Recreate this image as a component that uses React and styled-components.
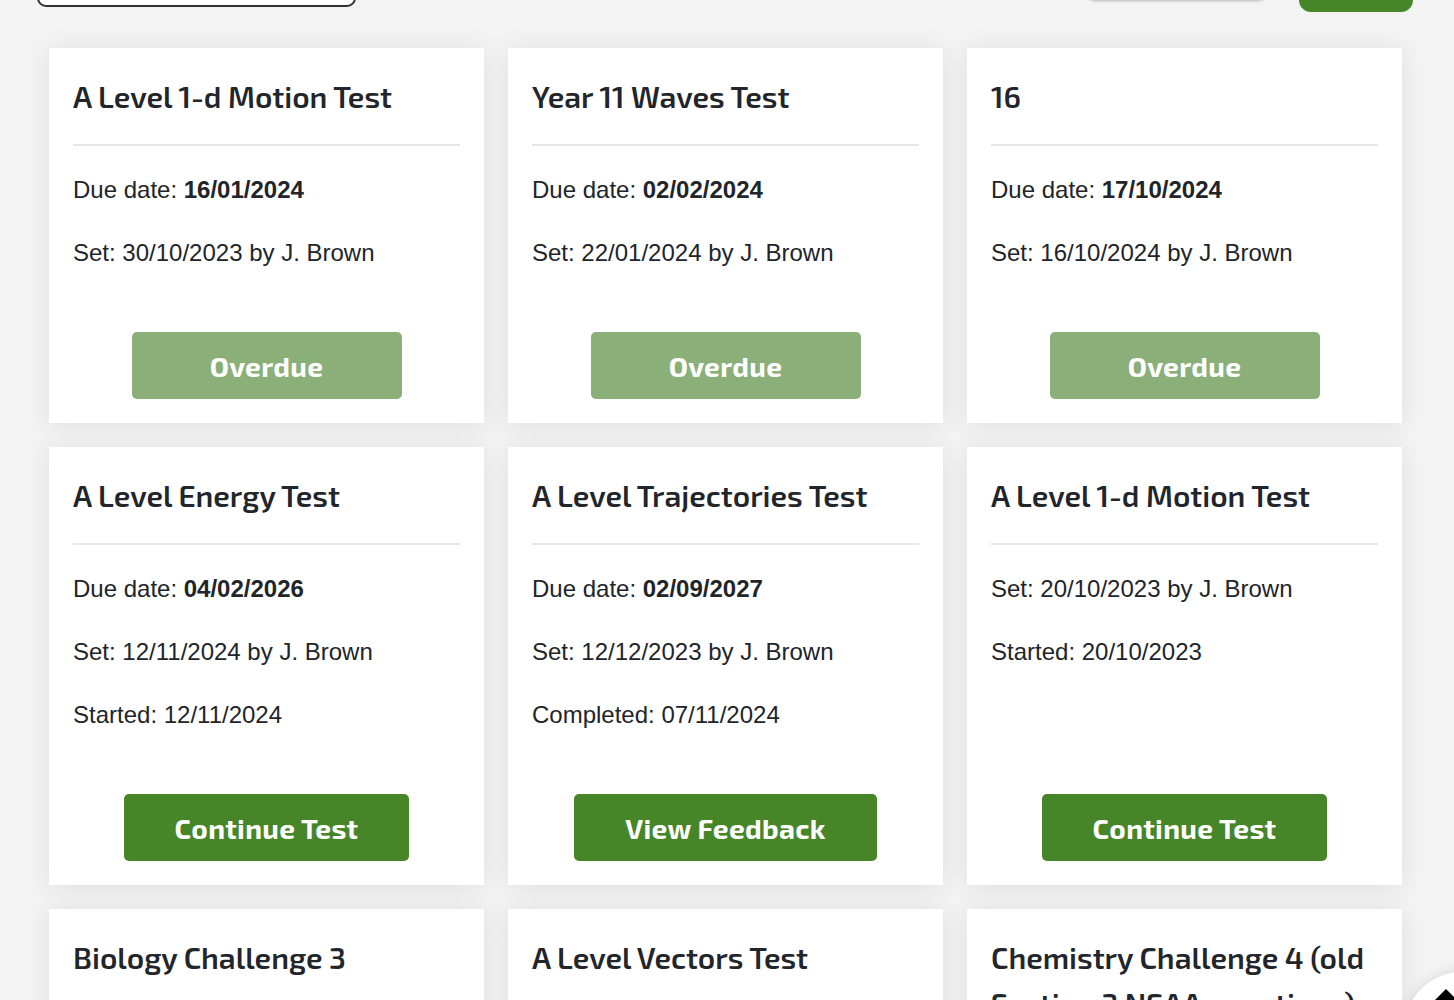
import React from "react";
import styled, { createGlobalStyle } from "styled-components";

const GlobalStyle = createGlobalStyle`
  html, body { margin: 0; padding: 0; }
  body {
    background: #f3f3f3;
    font-family: "Liberation Sans", Arial, sans-serif;
    color: #212529;
    overflow: hidden;
  }
`;

const Page = styled.div`
  margin-top: -45px;
  padding-bottom: 40px;
`;

const Toolbar = styled.div`
  display: flex;
  align-items: flex-start;
  padding: 0 41px 0 37px;
  margin-bottom: 36px;
`;

const SearchBox = styled.div`
  width: 319px;
  height: 52px;
  box-sizing: border-box;
  border: 2px solid #333;
  border-radius: 9px;
  background: #fff;
`;

const Spacer = styled.div`
  flex: 1;
`;

const Toggle = styled.div`
  display: flex;
  width: 183px;
  height: 46px;
  box-sizing: border-box;
  border: 1px solid #c9c9c9;
  border-radius: 10px;
  overflow: hidden;
  margin-right: 31px;
  box-shadow: 0 1px 2px rgba(0, 0, 0, 0.12);
`;

const ToggleHalf = styled.div`
  flex: 1;
  background: ${(p) => (p.$active ? "#fff" : "#e2e2e2")};
`;

const AddButton = styled.div`
  width: 114px;
  height: 57px;
  background: #468628;
  border-radius: 12px;
`;

const Grid = styled.div`
  display: grid;
  grid-template-columns: repeat(3, 435px);
  gap: 24px;
  padding-left: 49px;
`;

const Card = styled.div`
  background: #fff;
  padding: 25px 24px 24px;
  display: flex;
  flex-direction: column;
  box-shadow: 0 2px 24px rgba(0, 0, 0, 0.085);
`;

const Title = styled.h3`
  margin: 0 0 25px;
  font-family: "Exo 2", "Roboto", "Liberation Sans", sans-serif;
  font-weight: 600;
  font-size: 30px;
  line-height: 46px;
  color: #22252a;
`;

const Divider = styled.hr`
  margin: 0;
  border: 0;
  height: 2px;
  background: #e6e6ec;
`;

const Info = styled.div`
  display: flex;
  flex-direction: column;
  gap: 27px;
  padding: 26px 0 61px;
`;

const Line = styled.p`
  margin: 0;
  font-size: 24px;
  line-height: 36px;
  color: #212529;
  b {
    font-weight: 700;
  }
`;

const ButtonRow = styled.div`
  margin-top: auto;
  display: flex;
  justify-content: center;
`;

const ActionButton = styled.button`
  min-width: 270px;
  height: 67px;
  padding: 0 51px;
  border: 0;
  border-radius: 5px;
  background: ${(p) => (p.$muted ? "#8aaf78" : "#468628")};
  color: #fff;
  font-family: "Exo 2", "Roboto", "Liberation Sans", sans-serif;
  font-weight: 700;
  font-size: 28px;
  letter-spacing: 0.3px;
  cursor: pointer;
`;

const ScrollTop = styled.button`
  position: fixed;
  left: 1404px;
  top: 972px;
  width: 116px;
  height: 116px;
  border-radius: 50%;
  border: 0;
  background: #fff;
  box-shadow: 0 0 14px rgba(0, 0, 0, 0.12);
  padding: 0;
  cursor: pointer;
`;

const Arrow = styled.svg`
  position: absolute;
  left: 26px;
  top: 17px;
`;

const cards = [
  {
    title: "A Level 1-d Motion Test",
    due: "16/01/2024",
    lines: ["Set: 30/10/2023 by J. Brown"],
    action: "Overdue",
    muted: true,
  },
  {
    title: "Year 11 Waves Test",
    due: "02/02/2024",
    lines: ["Set: 22/01/2024 by J. Brown"],
    action: "Overdue",
    muted: true,
  },
  {
    title: "16",
    due: "17/10/2024",
    lines: ["Set: 16/10/2024 by J. Brown"],
    action: "Overdue",
    muted: true,
  },
  {
    title: "A Level Energy Test",
    due: "04/02/2026",
    lines: ["Set: 12/11/2024 by J. Brown", "Started: 12/11/2024"],
    action: "Continue Test",
  },
  {
    title: "A Level Trajectories Test",
    due: "02/09/2027",
    lines: ["Set: 12/12/2023 by J. Brown", "Completed: 07/11/2024"],
    action: "View Feedback",
  },
  {
    title: "A Level 1-d Motion Test",
    lines: ["Set: 20/10/2023 by J. Brown", "Started: 20/10/2023"],
    action: "Continue Test",
  },
  {
    title: "Biology Challenge 3",
    due: "01/12/2027",
    lines: ["Set: 01/11/2024 by J. Brown"],
    action: "Start Test",
  },
  {
    title: "A Level Vectors Test",
    due: "03/12/2027",
    lines: ["Set: 02/11/2024 by J. Brown"],
    action: "Start Test",
  },
  {
    title: "Chemistry Challenge 4 (old Section 3 NSAA questions)",
    due: "05/12/2027",
    lines: ["Set: 04/11/2024 by J. Brown"],
    action: "Start Test",
  },
];

export default function App() {
  return (
    <>
      <GlobalStyle />
      <Page>
        <Toolbar>
          <SearchBox />
          <Spacer />
          <Toggle>
            <ToggleHalf />
            <ToggleHalf $active />
          </Toggle>
          <AddButton />
        </Toolbar>
        <Grid>
          {cards.map((c, i) => (
            <Card key={i}>
              <Title>{c.title}</Title>
              <Divider />
              <Info>
                {c.due && (
                  <Line>
                    Due date: <b>{c.due}</b>
                  </Line>
                )}
                {c.lines.map((l) => (
                  <Line key={l}>{l}</Line>
                ))}
              </Info>
              <ButtonRow>
                <ActionButton $muted={c.muted}>{c.action}</ActionButton>
              </ButtonRow>
            </Card>
          ))}
        </Grid>
      </Page>
      <ScrollTop aria-label="Scroll to top">
        <Arrow width="32" height="20" viewBox="0 0 32 20">
          <path d="M16 0 L32 16 L0 16 Z" fill="#000" />
        </Arrow>
      </ScrollTop>
    </>
  );
}
